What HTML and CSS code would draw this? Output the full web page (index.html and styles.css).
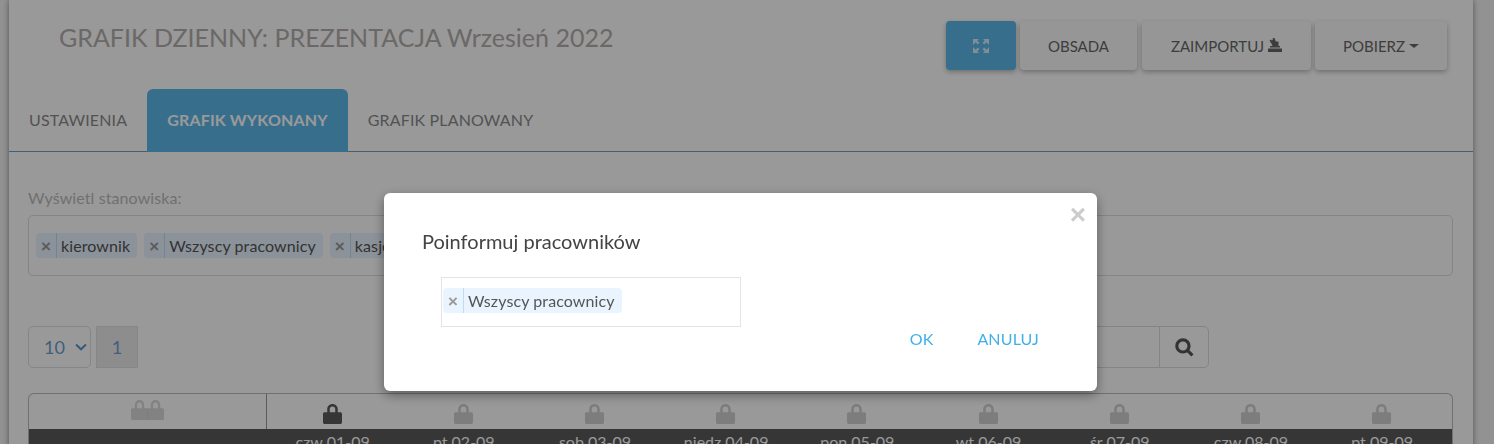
FILE: index.html
```html
<!DOCTYPE html>
<html lang="pl">
<head>
  <meta charset="UTF-8" />
  <meta name="viewport" content="width=device-width, initial-scale=1.0"/>
  <title>Grafik dzienny</title>
  <link rel="stylesheet" href="styles.css">
</head>
<body>

<svg class="icon-defs" aria-hidden="true">
  <symbol id="lock" viewBox="0 0 448 512" preserveAspectRatio="none">
    <path fill-rule="evenodd" d="M40 210h60v-80C100 58 156 0 224 0s124 58 124 130v80h60c22 0 40 18 40 40v222c0 22-18 40-40 40H40c-22 0-40-18-40-40V250c0-22 18-40 40-40zm120 0h128v-80c0-35-29-64-64-64s-64 29-64 64z"/>
  </symbol>
</svg>

<div class="card">
  <header class="top">
    <h1>GRAFIK DZIENNY: PREZENTACJA Wrzesień 2022</h1>
    <div class="actions">
      <button class="btn btn-blue btn-expand" aria-label="Pełny ekran">
        <svg class="expand" viewBox="0 0 16 14">
          <path d="M0 0h6L4.300 1.700 6.400 3.800 4.800 5.400 2.700 3.300 0 6zM16 0h-6l1.700 1.700L9.600 3.800l1.600 1.600 2.100-2.100L16 6zM0 14h6L4.300 12.300 6.400 10.200 4.800 8.600 2.700 10.700 0 8zM16 14h-6l1.700-1.700-2.100-2.100 1.600-1.600 2.100 2.100L16 8z"/>
        </svg>
      </button>
      <button class="btn btn-obsada">OBSADA</button>
      <button class="btn btn-import">ZAIMPORTUJ<svg class="stamp" viewBox="0 0 14 14"><path d="M0 14v-3.500h14V14zM2 9.500V8h2.500L4 6.500 1.500 2.500 3 1.500 3.800 2.600 5.200 1.300 4.500 0 6.500 0 7.800 3.500H10.500V8H12V9.500z"/></svg></button>
      <button class="btn btn-pobierz">POBIERZ<span class="caret"></span></button>
    </div>
  </header>

  <nav class="tabs">
    <a class="tab">USTAWIENIA</a>
    <a class="tab active">GRAFIK WYKONANY</a>
    <a class="tab">GRAFIK PLANOWANY</a>
  </nav>

  <section class="filters">
    <div class="filter-labels">
      <label>Wyświetl stanowiska:</label>
      <label>Wyświetl funkcje:</label>
    </div>
    <div class="tagbox">
      <span class="tag"><i>×</i><b>kierownik</b></span>
      <span class="tag"><i>×</i><b>Wszyscy pracownicy</b></span>
      <span class="tag"><i>×</i><b>kasjer</b></span>
    </div>
  </section>

  <section class="toolbar">
    <div class="pager">
      <span class="page-size">10
        <svg class="chevron" viewBox="0 0 12 8"><path d="M1 1.500 6 6.300 11 1.500" /></svg>
      </span>
      <span class="page-num">1</span>
    </div>
    <div class="search">
      <span class="search-input"></span>
      <span class="search-btn">
        <svg viewBox="0 0 18 18"><circle cx="7.500" cy="7.500" r="5.800"/><path d="M11.500 11.500 16.500 16.500"/></svg>
      </span>
    </div>
  </section>

  <section class="schedule">
    <div class="locks">
      <div class="lock-all">
        <svg class="lock"><use href="#lock"/></svg><svg class="lock lock-second"><use href="#lock"/></svg>
      </div>
      <div class="day"><svg class="lock lock-on"><use href="#lock"/></svg></div>
      <div class="day"><svg class="lock"><use href="#lock"/></svg></div>
      <div class="day"><svg class="lock"><use href="#lock"/></svg></div>
      <div class="day"><svg class="lock"><use href="#lock"/></svg></div>
      <div class="day"><svg class="lock"><use href="#lock"/></svg></div>
      <div class="day"><svg class="lock"><use href="#lock"/></svg></div>
      <div class="day"><svg class="lock"><use href="#lock"/></svg></div>
      <div class="day"><svg class="lock"><use href="#lock"/></svg></div>
      <div class="day"><svg class="lock"><use href="#lock"/></svg></div>
    </div>
    <div class="dates">
      <div></div>
      <div>czw 01-09</div>
      <div>pt 02-09</div>
      <div>sob 03-09</div>
      <div>niedz 04-09</div>
      <div>pon 05-09</div>
      <div>wt 06-09</div>
      <div>śr 07-09</div>
      <div>czw 08-09</div>
      <div>pt 09-09</div>
    </div>
  </section>
</div>

<div class="backdrop"></div>

<div class="modal">
  <span class="modal-close">×</span>
  <h2>Poinformuj pracowników</h2>
  <div class="modal-select">
    <span class="tag"><i>×</i><b>Wszyscy pracownicy</b></span>
  </div>
  <div class="modal-actions">
    <a>OK</a>
    <a>ANULUJ</a>
  </div>
</div>

</body>
</html>
```

FILE: styles.css
```css
* { box-sizing: border-box; }
html, body { height: 444px; overflow: hidden; }
body {
  margin: 0;
  font-family: 'Lato', sans-serif;
  background: #f4f4f4;
  color: #555;
}
.icon-defs { display: none; }

.card {
  background: #fff;
  margin: 0 21px 0 9px;
  height: 700px;
  box-shadow: 0 0 6px rgba(0,0,0,0.45);
}

.top {
  display: flex;
  justify-content: space-between;
  height: 89px;
  padding: 21px 26px 0 50px;
}
h1 {
  margin: 0;
  font-size: 25px;
  font-weight: 400;
  line-height: 32px;
  color: #b2aeac;
}
.actions { display: flex; gap: 4px; height: 49px; }
.btn {
  display: flex;
  align-items: center;
  justify-content: center;
  border: none;
  border-radius: 4px;
  background: #fbfbfb;
  color: #666;
  font-family: inherit;
  font-size: 15px;
  box-shadow: 0 2px 5px rgba(0,0,0,0.28);
}
.btn-blue { background: #5db8ea; }
.btn-expand { width: 70px; }
.btn-obsada { width: 117px; }
.btn-import { width: 169px; margin-left: 1px; }
.btn-pobierz { width: 132px; }
.expand { width: 16px; height: 14px; fill: #fff; opacity: 0.75; }
.stamp { width: 14px; height: 14px; margin: -2px 0 0 4px; fill: #666; }
.caret {
  display: inline-block;
  margin-left: 4px;
  border-top: 4px solid #666;
  border-left: 5px solid transparent;
  border-right: 5px solid transparent;
}

.tabs {
  display: flex;
  height: 63px;
  border-bottom: 1px solid #6f9ec4;
}
.tab {
  padding: 0 20px;
  height: 63px;
  line-height: 62px;
  font-size: 16px;
  letter-spacing: 0.15px;
  color: #8a8a8a;
}
.tab.active {
  background: #5db8ea;
  color: #fff;
  font-weight: 700;
  border-radius: 6px 6px 0 0;
}

.filters { padding: 36px 20px 0 19px; }
.filter-labels {
  display: flex;
  height: 27px;
  font-size: 16px;
  letter-spacing: 0.1px;
  line-height: 20px;
  color: #bbb;
}
.filter-labels label:first-child { width: 731px; }
.tagbox {
  height: 61px;
  padding: 17px 7px 0;
  display: flex;
  gap: 7px;
  border: 1px solid #dcdcdc;
  border-radius: 5px;
}
.tag {
  display: inline-flex;
  align-items: center;
  height: 25px;
  background: #e9f4ff;
  border-radius: 4px;
  font-size: 16px;
  letter-spacing: 0.1px;
  color: #555;
}
.tag i {
  width: 21px;
  height: 25px;
  line-height: 27px;
  text-align: center;
  font-family: 'Liberation Sans', sans-serif;
  font-size: 17px;
  font-style: normal;
  font-weight: 700;
  color: #999;
  border-right: 1px solid #bfdcf5;
}
.tag b { font-weight: 400; padding: 0 7px 0 4px; }

.toolbar {
  display: flex;
  justify-content: space-between;
  height: 42px;
  margin: 50px 264px 0 19px;
}
.pager { display: flex; gap: 5px; font-size: 18px; color: #6d9fd0; }
.page-size, .page-num {
  display: flex;
  align-items: center;
  justify-content: center;
}
.page-size {
  width: 63px;
  gap: 10px;
  padding-left: 12px;
  border: 1px solid #e0e0e0;
  border-radius: 5px;
}
.page-num { width: 42px; background: #ececec; border: 1px solid #e0e0e0; }
.chevron { width: 12px; height: 8px; fill: none; stroke: #5d95c9; stroke-width: 2; }
.search { display: flex; width: 250px; height: 42px; border: 1px solid #dcdcdc; border-radius: 5px; }
.search-input { flex: 1; }
.search-btn {
  width: 49px;
  display: flex;
  align-items: center;
  justify-content: center;
  border-left: 1px solid #dcdcdc;
}
.search-btn svg { width: 19px; height: 19px; fill: none; stroke: #555; stroke-width: 3; }

.schedule {
  margin: 25px 20px 0 19px;
  border: 1px solid #bbb;
  border-bottom: none;
  border-radius: 6px 6px 0 0;
  overflow: hidden;
}
.locks, .dates {
  display: grid;
  grid-template-columns: 238px repeat(9, 131.2px);
  text-align: center;
}
.locks { height: 35px; }
.lock-all {
  display: flex;
  justify-content: center;
  padding-top: 6px;
  border-right: 1px solid #999;
}
.day { padding-top: 10px; padding-right: 1px; }
.lock { display: block; margin: 0 auto; width: 19px; height: 20px; fill: #d0d0d0; }
.lock-all .lock { margin: 0; width: 17px; height: 20px; opacity: 0.8; }
.lock-all .lock-second { margin-left: -1px; }
.lock-on { fill: #5a5a5a; }
.dates {
  background: #5a5a5a;
  color: #fff;
  font-size: 16px;
  line-height: 26px;
}

/* everything behind the dialog is dimmed */
.backdrop {
  position: fixed;
  inset: 0;
  background: rgba(0,0,0,0.4);
}

.modal {
  position: fixed;
  left: 384px;
  top: 193px;
  width: 713px;
  height: 198px;
  padding: 36px 38px 0;
  background: #fff;
  border-radius: 6px;
  box-shadow: 0 4px 12px rgba(0,0,0,0.4);
}
.modal h2 {
  margin: 0;
  font-size: 20px;
  font-weight: 400;
  line-height: 24px;
  color: #444;
}
.modal-close {
  position: absolute;
  top: 7px;
  right: 11px;
  font-family: 'Liberation Sans', sans-serif;
  font-size: 28px;
  line-height: 30px;
  font-weight: 700;
  color: #ccc;
}
.modal-select {
  width: 300px;
  height: 50px;
  margin: 24px 0 0 19px;
  padding: 10px 1px 0;
  border: 1px solid #e4e4e4;
}
.modal-actions {
  display: flex;
  justify-content: flex-end;
  gap: 44px;
  margin-top: 2px;
  padding-right: 20px;
  font-size: 16px;
  letter-spacing: 0.15px;
  line-height: 20px;
  color: #3fb1e8;
}
```
